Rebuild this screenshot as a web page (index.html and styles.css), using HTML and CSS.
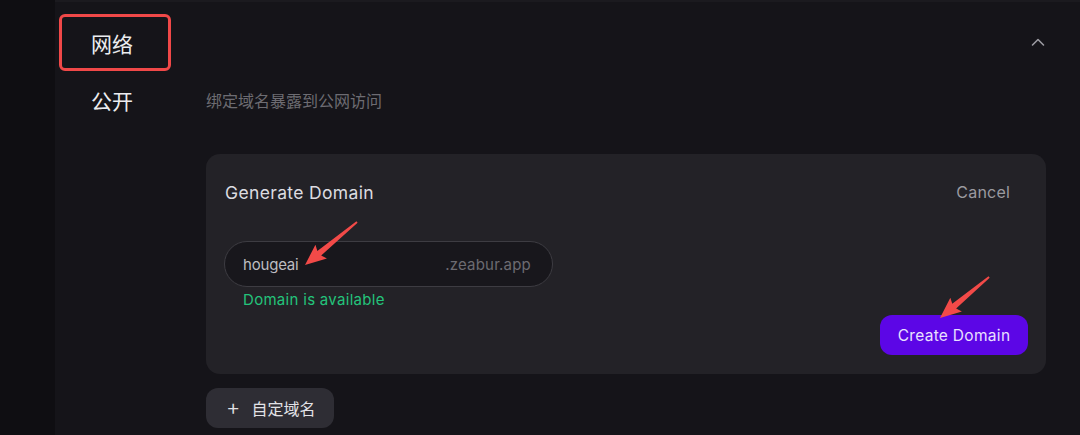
FILE: index.html
```html
<!DOCTYPE html>
<html lang="zh-CN">
<head>
<meta charset="utf-8">
<title>网络</title>
<link rel="stylesheet" href="styles.css">
</head>
<body>
<div class="page">
  <aside class="rail"></aside>
  <main class="main">
    <div class="section">
      <div class="label-cell">
        <div class="tab-label">网络</div>
      </div>
      <div class="head-right">
        <svg class="chevron" width="14" height="10" viewBox="0 0 14 10"><polyline points="1.5,8 7,2.5 12.5,8" fill="none" stroke="#9c9ba1" stroke-width="1.6" stroke-linecap="round" stroke-linejoin="round"/></svg>
      </div>

      <div class="sub-label">公开</div>
      <div class="desc">绑定域名暴露到公网访问</div>

      <div class="spacer"></div>
      <div class="card">
        <div class="card-head">
          <span class="card-title">Generate Domain</span>
          <span class="cancel">Cancel</span>
        </div>
        <div class="field">
          <span class="field-value">hougeai</span>
          <span class="field-suffix">.zeabur.app</span>
        </div>
        <div class="status">Domain is available</div>
        <div class="actions">
          <button class="primary">Create Domain</button>
        </div>
      </div>

      <div class="spacer"></div>
      <div class="add-row">
        <button class="ghost"><span class="plus">+</span>自定域名</button>
      </div>
    </div>
  </main>
  <svg class="annot" width="1080" height="435" viewBox="0 0 1080 435">
    <g transform="translate(305,265) rotate(-39.6)" fill="#f24a48">
      <polygon points="0,0 21,-9 18.5,-3 67.5,-0.9 67.5,0.9 18.5,3 21,9"/>
    </g>
    <g transform="translate(940,318) rotate(-39.9)" fill="#f24a48">
      <polygon points="0,0 21,-9 18.5,-3 64,-0.9 64,0.9 18.5,3 21,9"/>
    </g>
  </svg>
</div>
</body>
</html>
```

FILE: styles.css
```css
* { box-sizing: border-box; }
html, body {
  margin: 0;
  padding: 0;
  background: #151419;
}
body {
  font-family: Inter, "Noto Sans CJK SC", "Noto Sans", sans-serif;
  color: #e4e4e8;
}
.page {
  position: relative;
  display: flex;
  width: 1080px;
  height: 435px;
  overflow: hidden;
}
.rail {
  width: 55px;
  flex: none;
  background: #0f0e12;
}
.main {
  flex: 1;
  background: #151419;
  border-top: 2px solid #1b1a1f;
  padding: 12px 34px 0 4px;
}
.section {
  display: grid;
  grid-template-columns: 147px 1fr;
  align-items: center;
}
.label-cell { height: 57px; }
.tab-label {
  width: 112px;
  height: 57px;
  border: 3px solid #f04848;
  border-radius: 6px;
  display: flex;
  align-items: center;
  padding-left: 29px;
  font-size: 21px;
  color: #ececef;
  font-family: "Noto Sans CJK SC", sans-serif;
}
.head-right {
  display: flex;
  justify-content: flex-end;
  padding-right: 1px;
  padding-bottom: 2px;
}
.chevron { display: block; }
.sub-label {
  padding-left: 32px;
  font-size: 21px;
  line-height: 30px;
  margin-top: 14px;
  color: #ececef;
  font-family: "Noto Sans CJK SC", sans-serif;
}
.desc {
  margin-top: 13px;
  font-size: 16px;
  line-height: 30px;
  color: #6d6c72;
  font-family: "Noto Sans CJK SC", sans-serif;
}
.spacer { height: 1px; }
.card {
  margin-top: 39px;
  background: #232227;
  border-radius: 14px;
  padding: 26px 18px 19px 18px;
  display: flex;
  flex-direction: column;
  align-items: flex-start;
}
.card-head {
  width: 100%;
  display: flex;
  justify-content: space-between;
  align-items: center;
  height: 24px;
}
.card-title {
  font-size: 17.5px;
  letter-spacing: 0.35px;
  color: #dcdce0;
  padding-left: 1px;
}
.cancel {
  font-size: 16px;
  letter-spacing: 0.2px;
  color: #9b9aa0;
  padding-right: 18px;
}
.field {
  margin-top: 37px;
  width: 329px;
  height: 46px;
  border: 1px solid #3d3c42;
  border-radius: 23px;
  background: #18171c;
  display: flex;
  align-items: center;
  justify-content: space-between;
  padding: 0 21px 0 18px;
  font-size: 15px;
}
.field-value { color: #bdbdc1; letter-spacing: -0.2px; }
.field-suffix { color: #6c6b71; letter-spacing: 0.2px; }
.status {
  margin-top: 3px;
  padding-left: 19px;
  font-size: 15px;
  letter-spacing: 0.3px;
  line-height: 20px;
  color: #23c47b;
}
.actions {
  width: 100%;
  display: flex;
  justify-content: flex-end;
  margin-top: 5px;
}
.primary {
  width: 148px;
  height: 40px;
  border: none;
  border-radius: 12px;
  background: #5c06e6;
  color: #e8e0ff;
  font-family: Inter, sans-serif;
  font-size: 15.5px;
  letter-spacing: 0.3px;
  padding: 0;
}
.add-row {
  margin-top: 14px;
}
.ghost {
  height: 40px;
  border: none;
  border-radius: 12px;
  background: #2e2d34;
  color: #e2e2e6;
  font-family: "Noto Sans CJK SC", sans-serif;
  font-size: 16px;
  padding: 0 19px 0 20px;
  display: inline-flex;
  align-items: center;
}
.plus {
  font-family: Inter, sans-serif;
  font-size: 22px;
  font-weight: 300;
  margin-right: 11px;
  line-height: 1;
  position: relative;
  top: -1px;
}
.annot {
  position: absolute;
  left: 0;
  top: 0;
  pointer-events: none;
}
```
